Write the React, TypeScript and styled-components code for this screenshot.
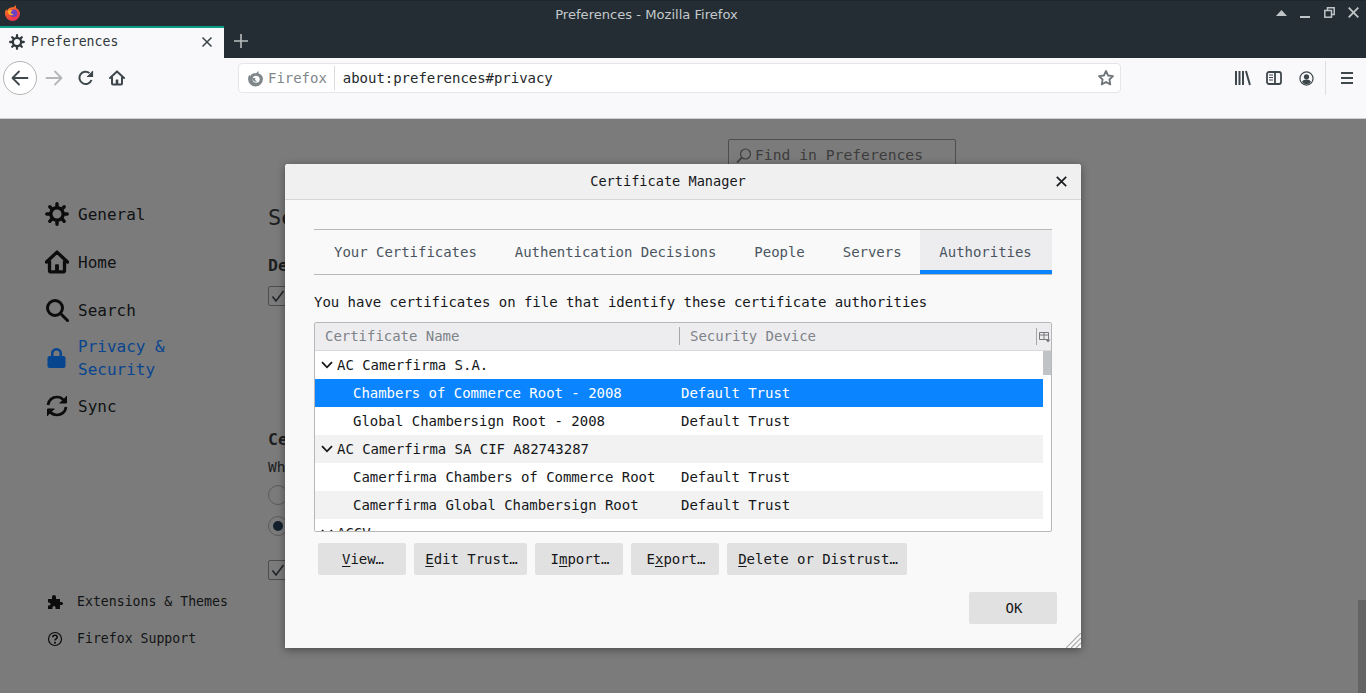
import React from 'react';
import styled, { createGlobalStyle } from 'styled-components';

const Global = createGlobalStyle`
  html, body { margin: 0; padding: 0; height: 100%; overflow: hidden; background: #7b7b7b; }
  * { box-sizing: border-box; }
  #root { height: 100%; }
`;
const mono = `"DejaVu Sans Mono", monospace`;

const Page = styled.div`
  position: relative; width: 1366px; height: 693px; overflow: hidden;
  display: flex; flex-direction: column; font-family: ${mono}; font-size: 14px; letter-spacing: -0.03px;
`;
const Chrome = styled.header`
  height: 58px; background: #232d33; border-top: 1px solid #1d262b; position: relative;
  display: flex; flex-direction: column; flex: none;
`;
const TitleBar = styled.div`
  height: 24px; flex: none; display: flex; align-items: center; padding: 0 7px 3px 4px; position: relative; margin-top: 1px;
`;
const WindowTitle = styled.div`
  position: absolute; left: 0; right: 73px; top: 0; text-align: center; line-height: 25px;
  font-family: "DejaVu Sans", sans-serif; font-size: 13.1px; color: #c4c9cb; letter-spacing: 0;
`;
const WinButtons = styled.div`
  margin-left: auto; display: flex; gap: 13px; align-items: center;
`;
const TabStrip = styled.div`
  height: 32px; display: flex; align-items: stretch;
`;
const ActiveTab = styled.div`
  width: 224px; background: #f9f9fb; border-top: 2px solid #0a9d88; display: flex; align-items: center;
  padding: 0 11px 3px 9px; gap: 6px; color: #30383c; font-size: 13.2px; letter-spacing: 0;
`;
const TabLabel = styled.span`flex: 1;`;
const NewTab = styled.div`width: 33px; display: flex; align-items: center; justify-content: center; padding-bottom: 3px;`;
const NavBar = styled.nav`
  height: 61px; flex: none; background: #f9f9fb; border-bottom: 1px solid #cfcfd3; display: flex; align-items: flex-start;
  padding: 3px 0 0 3px;
`;
const BackCircle = styled.div`
  width: 34px; height: 34px; border: 1px solid #b4b4b4; border-radius: 50%; background: #fff;
  display: flex; align-items: center; justify-content: center; flex: none;
`;
const NavIcons = styled.div`
  display: flex; align-items: center; height: 34px; gap: 15px; margin-left: 8px; width: 193px; flex: none;
`;
const UrlBar = styled.div`
  width: 883px; height: 30px; margin-top: 2px; background: #fff; border: 1px solid #e6e6e9; border-radius: 4px; flex: none;
  display: flex; align-items: center; padding: 0 5px 0 8px;
`;
const Identity = styled.span`
  color: #80868a; font-size: 14px; margin-left: 4px; padding-right: 7px; border-right: 1px solid #dcdcdf; line-height: 24px;
`;
const Url = styled.span`margin-left: 8px; color: #24292c; flex: 1; white-space: nowrap;`;
const RightIcons = styled.div`
  display: flex; align-items: center; height: 34px; margin-left: 106px;
`;
const IconSlot = styled.div<{ $w: number }>`
  width: ${p => p.$w}px; display: flex; justify-content: center; align-items: center;
`;
const Divider = styled.div`width: 1px; height: 34px; background: #dedee1; margin-left: 3px;`;
const MenuSlot = styled.div`margin-left: 15px; display: flex;`;

const Content = styled.main`
  flex: 1; background: #7b7b7b; position: relative; display: grid; grid-template-columns: 268px 1fr; color: #111;
`;
const Side = styled.aside`
  padding: 80px 0 0 45px; display: flex; flex-direction: column; position: relative; height: 100%;
`;
const SideItem = styled.div<{ $h: number; $active?: boolean }>`
  display: flex; align-items: center; height: ${p => p.$h}px; gap: 9px; font-size: 16px; line-height: 23px; flex: none;
  color: ${p => (p.$active ? '#08458f' : '#101214')}; letter-spacing: 0;
  & > svg { flex: none; }
`;
const SideFooter = styled.div`
  margin-top: auto; margin-bottom: 46px; padding-left: 1px; display: flex; flex-direction: column; gap: 20px;
`;
const FootItem = styled.div`
  display: flex; align-items: center; gap: 14px; font-size: 13.2px; height: 17px; color: #121416; margin-left: 1px; letter-spacing: 0; white-space: nowrap;
`;
const Main = styled.section`
  position: relative; color: #1c1e20;
`;
const FindBox = styled.div`
  position: absolute; left: 460px; top: 20px; width: 228px; height: 40px; border: 1px solid #4e4e4e; border-radius: 2px;
  display: flex; align-items: flex-start; padding: 6px 0 0 7px; gap: 3px; color: #3d3d3d; font-size: 14.7px; letter-spacing: 0;
`;
const Frag = styled.div<{ $x?: number; $y: number; $size: number; $bold?: boolean }>`
  position: absolute; left: ${p => p.$x ?? 0}px; top: ${p => p.$y}px; font-size: ${p => p.$size}px; font-weight: ${p => (p.$bold ? 700 : 400)};
  white-space: nowrap; line-height: 1;
`;
const Check = styled.div<{ $y: number }>`
  position: absolute; left: 0; top: ${p => p.$y}px; width: 20px; height: 20px; border: 1px solid #4d4d4d; border-radius: 2px;
  display: flex; align-items: center; justify-content: center;
`;
const Radio = styled.div<{ $y: number; $on?: boolean }>`
  position: absolute; left: 0; top: ${p => p.$y}px; width: 20px; height: 20px; border: 1px solid #5a5a5a; border-radius: 50%;
  display: flex; align-items: center; justify-content: center;
  &::after { content: ''; width: 10px; height: 10px; border-radius: 50%; background: ${p => (p.$on ? '#15202e' : 'transparent')}; }
`;
const ScrollThumb = styled.div`
  position: absolute; right: 0; top: 481px; width: 8px; height: 93px; background: #646464;
`;

const Dialog = styled.div`
  position: absolute; left: 285px; top: 164px; width: 796px; height: 484px; background: #f9f9f9; border-radius: 3px 3px 0 0;
  box-shadow: 0 2px 8px rgba(0,0,0,.4); display: flex; flex-direction: column; color: #111;
`;
const DialogHead = styled.div`
  height: 36px; flex: none; background: #f0f0f0; border-bottom: 1px solid #d6d6d6; border-radius: 3px 3px 0 0;
  display: flex; align-items: center; justify-content: center; position: relative; font-size: 13.6px; color: #16181a; padding: 0 30px 1px 0; letter-spacing: 0;
`;
const CloseBtn = styled.div`position: absolute; right: 14px; top: 12px; display: flex;`;
const DialogBody = styled.div`
  flex: 1; padding: 29px 29px 0 29px; display: flex; flex-direction: column; position: relative;
`;
const Tabs = styled.div`
  height: 46px; border-top: 1px solid #b8b8b8; border-bottom: 1px solid #b8b8b8; display: flex; flex: none; padding-left: 1px;
`;
const TabItem = styled.div`
  padding: 0 19px; display: flex; align-items: center; color: #4a5560; font-size: 14px; height: 44px; white-space: nowrap; flex: none;
`;
const ActiveTabItem = styled(TabItem)`
  margin-left: -1px; width: 132px; padding: 4px 0 0; justify-content: center;
  background: #ededf0; border-bottom: 4px solid #0a84ff;
`;
const Caption = styled.div`
  margin-top: 19px; line-height: 17px; font-size: 14px; color: #15171a; flex: none;
`;
const Tree = styled.div`
  margin-top: 11px; height: 210px; border: 1px solid #b8b8b8; border-radius: 2px; background: #fff; flex: none; overflow: hidden; position: relative;
`;
const TreeHead = styled.div`
  height: 28px; background: #ededf0; border-bottom: 1px solid #d9d9dc; display: flex; align-items: center; color: #7e8388; position: relative; font-size: 14px; padding-bottom: 2px;
`;
const HeadCell = styled.div<{ $w: number }>`
  width: ${p => p.$w}px; padding-left: 10px; flex: none;
  &:nth-child(2) { border-left: 1px solid #a6a6a8; line-height: 18px; }
`;
const ColPicker = styled.div`
  position: absolute; right: 0; top: 0; height: 28px; width: 15px; display: flex; align-items: center; justify-content: flex-end;
  &::before { content: ''; position: absolute; left: 0; top: 5px; height: 17px; width: 1px; background: #a6a6a8; }
`;
const Rows = styled.div`width: 728px;`;
const Row = styled.div<{ $alt?: boolean; $sel?: boolean; $child?: boolean }>`
  height: 28px; display: flex; align-items: center; font-size: 14px;
  background: ${p => (p.$sel ? '#0a84ff' : p.$alt ? '#f2f2f2' : '#fff')};
  color: ${p => (p.$sel ? '#fff' : '#15171a')};
  padding-left: ${p => (p.$child ? '38px' : '6px')};
`;
const RowName = styled.span<{ $child?: boolean }>`
  width: ${p => (p.$child ? '328px' : 'auto')}; white-space: nowrap; margin-left: ${p => (p.$child ? '0' : '4px')};
`;
const Thumb = styled.div`
  position: absolute; right: 0; top: 28px; width: 8px; height: 24px; background: #bfc3c5;
`;
const BtnRow = styled.div`
  margin-top: 11px; padding-left: 4px; display: flex; gap: 8px; flex: none;
`;
const Btn = styled.div<{ $w: number }>`
  width: ${p => p.$w}px; height: 32px; background: #e1e1e1; border-radius: 2px; display: flex; align-items: center; justify-content: center;
  font-size: 14px; color: #15171a; padding: 0 0 1px 2px;
  u { text-underline-offset: 2px; }
`;
const OkRow = styled.div`
  margin-top: 17px; display: flex; justify-content: flex-end; margin-right: -5px; flex: none;
`;
const Grip = styled.svg`position: absolute; right: 0; bottom: 0;`;

const Gear = ({ s = 16, c = '#30383c' }: { s?: number; c?: string }) => (
  <svg width={s} height={s} viewBox="0 0 24 24" fill="none">
    <circle cx="12" cy="12" r="6.2" stroke={c} strokeWidth="3.4" />
    <g stroke={c} strokeWidth="3.4" strokeLinecap="round">
      <path d="M12 1.8v2.6M12 19.6v2.6M1.8 12h2.6M19.6 12h2.6M4.8 4.8l1.9 1.9M17.3 17.3l1.9 1.9M4.8 19.2l1.9-1.9M17.3 6.7l1.9-1.9" />
    </g>
  </svg>
);
const Home = ({ s = 16, c = '#3e474c', w = 2 }: { s?: number; c?: string; w?: number }) => (
  <svg width={s} height={s} viewBox="0 0 16 16" fill="none">
    <path d="M1 8 8 1.4 15 8" stroke={c} strokeWidth={w} strokeLinecap="round" strokeLinejoin="round" />
    <path d="M3 7v6.6c0 .6.4 1 1 1h8c.6 0 1-.4 1-1V7" stroke={c} strokeWidth={w} />
    <rect x="6.7" y="9.5" width="2.6" height="5" rx=".6" fill={c} />
  </svg>
);
const Firefox = () => (
  <svg width="17" height="17" viewBox="0 0 18 18">
    <defs>
      <linearGradient id="ff" x1="0" y1="0" x2="0.6" y2="1">
        <stop offset="0" stopColor="#ff9a1f" />
        <stop offset="0.55" stopColor="#f0502e" />
        <stop offset="1" stopColor="#e8305e" />
      </linearGradient>
    </defs>
    <path d="M12 1c1 1.500 1 2.500 .6 3.200C15.500 5.500 17 8 17 10a8 8 0 1 1-16 0c0-2 .7-3.700 1.500-4.800 0 .9.200 1.500.7 1.900C4.500 4.500 7 3.500 9 3.500c1.200 0 2.500-.9 3-2.500z" fill="url(#ff)" />
    <circle cx="10" cy="9.800" r="4" fill="#6d3fc4" />
    <path d="M4.300 6.800c1.500-.8 3.600-.8 5 .2l-2.200 1.400c.2 1.700 1.700 2.700 3.400 2.300-1.200 1.700-4 1.700-5.400 0-.7-.9-1-2.500-.8-3.900z" fill="#ffb02a" />
  </svg>
);
const Chevron = () => (
  <svg width="12" height="8" viewBox="0 0 12 8" fill="none" stroke="#15171a" strokeWidth="1.800"><path d="M1 1.200 6 6.300l5-5.100" /></svg>
);
const Tick = () => (
  <svg width="14" height="14" viewBox="0 0 14 14" fill="none" stroke="#202428" strokeWidth="1.600"><path d="M1.500 7.500 5 12 12.500 2" /></svg>
);

export default function App() {
  return (
    <Page>
      <Global />
      <Chrome>
        <TitleBar>
          <Firefox />
          <WindowTitle>Preferences - Mozilla Firefox</WindowTitle>
          <WinButtons>
            <svg width="11" height="6" viewBox="0 0 11 6"><path d="M5.500 0 11 6H0z" fill="#c0c5c7" /></svg>
            <svg width="11" height="11" viewBox="0 0 11 11"><rect x="0" y="9" width="10" height="2" fill="#c0c5c7" /></svg>
            <svg width="11" height="11" viewBox="0 0 11 11" fill="none" stroke="#c0c5c7" strokeWidth="1.500"><path d="M3.500 3V.8h6.700v6.700H8" /><rect x=".8" y="3.500" width="6.700" height="6.700" /></svg>
            <svg width="11" height="11" viewBox="0 0 11 11" stroke="#c0c5c7" strokeWidth="1.800"><path d="M.7.700l9.600 9.600M10.300.7.700 10.300" /></svg>
          </WinButtons>
        </TitleBar>
        <TabStrip>
          <ActiveTab>
            <Gear s={16} />
            <TabLabel>Preferences</TabLabel>
            <svg width="12" height="12" viewBox="0 0 12 12" stroke="#3a4347" strokeWidth="1.500"><path d="M1.500 1.500l9 9M10.500 1.500l-9 9" /></svg>
          </ActiveTab>
          <NewTab>
            <svg width="14" height="14" viewBox="0 0 14 14" stroke="#b9bec0" strokeWidth="1.600"><path d="M7 0v14M0 7h14" /></svg>
          </NewTab>
        </TabStrip>
      </Chrome>
      <NavBar>
        <BackCircle>
          <svg width="18" height="16" viewBox="0 0 18 16" fill="none" stroke="#3e474c" strokeWidth="1.800" strokeLinecap="round" strokeLinejoin="round"><path d="M1.500 8h15M8 1.500 1.500 8 8 14.500" /></svg>
        </BackCircle>
        <NavIcons>
          <svg width="18" height="16" viewBox="0 0 18 16" fill="none" stroke="#b4b6b8" strokeWidth="1.800" strokeLinecap="round" strokeLinejoin="round"><path d="M1.500 8h15M10 1.500 16.500 8 10 14.500" /></svg>
          <svg width="16" height="16" viewBox="0 0 16 16" fill="none" stroke="#3e474c" strokeWidth="2"><path d="M13.500 10A6.200 6.200 0 1 1 11.500 3" /><path d="M14.500 1v5.500H9" fill="#3e474c" strokeWidth="1.200" /></svg>
          <Home />
        </NavIcons>
        <UrlBar>
          <svg width="17" height="17" viewBox="0 0 16 16"><path d="M10.500 .8c.5 1 .5 1.700.2 2.300C13.400 4 15 6 15 8.500a7 7 0 1 1-14 0c0-1.700.6-3.200 1.300-4.200 0 .8.200 1.300.6 1.600C4 3.500 6 3 8 3c1 0 2-.7 2.500-2.200z" fill="#80878b" /><circle cx="8.600" cy="8.600" r="3.300" fill="#fff" /><path d="M5 7.500h3l-.5 2 2 1c-1.500 1-4 .5-4.500-3z" fill="#80878b" /></svg>
          <Identity>Firefox</Identity>
          <Url>about:preferences#privacy</Url>
          <svg width="18" height="18" viewBox="0 0 18 18" fill="none" stroke="#6e7579" strokeWidth="1.800" strokeLinejoin="round"><path d="M9 2l2.100 4.500 4.900.6-3.600 3.400.9 4.900L9 13l-4.300 2.400.9-4.900L2 7.100l4.900-.6z" /></svg>
        </UrlBar>
        <RightIcons>
          <IconSlot $w={31}>
            <svg width="16" height="16" viewBox="0 0 16 16" fill="#3e474c"><rect x="0" y="1" width="2" height="14" /><rect x="3.500" y="1" width="2" height="14" /><rect x="7" y="1" width="2" height="14" /><path d="M10 1.300l1.900-.5 4 14-1.900.5z" /></svg>
          </IconSlot>
          <IconSlot $w={32}>
            <svg width="16" height="14" viewBox="0 0 16 14" fill="none"><rect x="1" y="1" width="14" height="12" rx="2" stroke="#3e474c" strokeWidth="1.800" /><path d="M9 1v12" stroke="#3e474c" strokeWidth="1.800" /><path d="M3 4h4M3 6.500h4M3 9h4" stroke="#3e474c" strokeWidth="1.200" /></svg>
          </IconSlot>
          <IconSlot $w={32}>
            <svg width="15" height="15" viewBox="0 0 16 16" fill="none"><circle cx="8" cy="8" r="7" stroke="#3e474c" strokeWidth="1.300" /><circle cx="8" cy="6.200" r="2.800" fill="#3e474c" /><path d="M3.200 11.500c1-1.800 2.800-2.500 4.800-2.500s3.800.7 4.800 2.500C11.500 13.500 9.800 14 8 14s-3.500-.5-4.800-2.500z" fill="#3e474c" /></svg>
          </IconSlot>
          <Divider />
          <MenuSlot>
            <svg width="12" height="14" viewBox="0 0 12 14" stroke="#3e474c" strokeWidth="1.800"><path d="M0 2h12M0 7h12M0 12h12" /></svg>
          </MenuSlot>
        </RightIcons>
      </NavBar>
      <Content>
        <Side>
          <SideItem $h={30}><Gear s={24} c="#0c0c0c" /><span>General</span></SideItem>
          <SideItem $h={18} />
          <SideItem $h={30}><Home s={24} c="#0c0c0c" w={2.200} /><span>Home</span></SideItem>
          <SideItem $h={18} />
          <SideItem $h={30}>
            <svg width="24" height="24" viewBox="0 0 24 24" fill="none" stroke="#0c0c0c" strokeWidth="3" strokeLinecap="round"><circle cx="10" cy="10" r="7.500" /><path d="M15.500 15.500 22.500 22.500" /></svg>
            <span>Search</span>
          </SideItem>
          <SideItem $h={10} />
          <SideItem $h={46} $active>
            <svg width="24" height="24" viewBox="0 0 24 24" fill="#08458f"><rect x="2.500" y="10" width="18" height="12" rx="2" /><path d="M6 11V7.500a5.500 5.500 0 0 1 11 0V11h-2.500V7.500a3 3 0 0 0-6 0V11z" /></svg>
            <span>Privacy &amp;<br />Security</span>
          </SideItem>
          <SideItem $h={10} />
          <SideItem $h={30}>
            <svg width="24" height="24" viewBox="0 0 24 24" fill="none" stroke="#0c0c0c" strokeWidth="2.700"><path d="M3 11C3.500 6 7.500 3 12 3c3.500 0 6 1.800 7.500 4.500" /><path d="M21.500 2v7h-7" fill="#0c0c0c" strokeWidth="1" /><path d="M21 13c-.5 5-4.500 8-9 8-3.500 0-6-1.800-7.500-4.500" /><path d="M2.500 22v-7h7" fill="#0c0c0c" strokeWidth="1" /></svg>
            <span>Sync</span>
          </SideItem>
          <SideFooter>
            <FootItem>
              <svg width="16" height="16" viewBox="0 0 16 16" fill="#0c0c0c"><path d="M1 5h4V3a2 2 0 0 1 4 0v2h4v3h1.500a1.500 1.500 0 0 1 0 3H13v4H8.500v-1.500a1.500 1.500 0 0 0-3 0V15H1v-3.500h1a1.500 1.500 0 0 0 0-3H1z" /></svg>
              <span>Extensions &amp; Themes</span>
            </FootItem>
            <FootItem>
              <svg width="16" height="16" viewBox="0 0 16 16" fill="none" stroke="#0c0c0c" strokeWidth="1.200"><circle cx="8" cy="8" r="6.500" /><path d="M5.800 6.200C5.800 5 6.800 4.200 8 4.200s2.200.8 2.200 2c0 1.700-2.200 1.600-2.200 3.400" strokeWidth="1.500" /><circle cx="8" cy="11.700" r="1" fill="#0c0c0c" stroke="none" /></svg>
              <span>Firefox Support</span>
            </FootItem>
          </SideFooter>
        </Side>
        <Main>
          <FindBox>
            <svg width="16" height="16" viewBox="0 0 16 16" fill="none" stroke="#3d3d3d" strokeWidth="1.200" style={{ marginTop: 2 }}><circle cx="9.500" cy="6" r="5" /><path d="M5.800 9.700 1 14.500" strokeWidth="1.700" /></svg>
            <span>Find in Preferences</span>
          </FindBox>
          <Frag $y={88} $size={22}>Se</Frag>
          <Frag $y={139} $size={16.500} $bold>De</Frag>
          <Check $y={167}><Tick /></Check>
          <Frag $y={313} $size={16.500} $bold>Ce</Frag>
          <Frag $y={341} $size={14.500}>Wh</Frag>
          <Radio $y={366} />
          <Radio $y={397} $on />
          <Check $y={441}><Tick /></Check>
        </Main>
        <ScrollThumb />
      </Content>
      <Dialog>
        <DialogHead>
          Certificate Manager
          <CloseBtn>
            <svg width="11" height="11" viewBox="0 0 11 11" stroke="#1a1c1e" strokeWidth="1.700"><path d="M.8.800l9.400 9.400M10.200.8.800 10.200" /></svg>
          </CloseBtn>
        </DialogHead>
        <DialogBody>
          <Tabs>
            <TabItem>Your Certificates</TabItem>
            <TabItem>Authentication Decisions</TabItem>
            <TabItem>People</TabItem>
            <TabItem>Servers</TabItem>
            <ActiveTabItem>Authorities</ActiveTabItem>
          </Tabs>
          <Caption>You have certificates on file that identify these certificate authorities</Caption>
          <Tree>
            <TreeHead>
              <HeadCell $w={364}>Certificate Name</HeadCell>
              <HeadCell $w={300}>Security Device</HeadCell>
              <ColPicker>
                <svg width="12" height="12" viewBox="0 0 12 12" fill="none" stroke="#77797c"><path d="M.5 1.500h9v7h-9zM.5 4h9M5 1.500v7" /><path d="M6.500 8.500h5L9 11.500z" fill="#77797c" stroke="none" /></svg>
              </ColPicker>
            </TreeHead>
            <Rows>
              <Row><Chevron /><RowName>AC Camerfirma S.A.</RowName></Row>
              <Row $sel $child><RowName $child>Chambers of Commerce Root - 2008</RowName><span>Default Trust</span></Row>
              <Row $child><RowName $child>Global Chambersign Root - 2008</RowName><span>Default Trust</span></Row>
              <Row $alt><Chevron /><RowName>AC Camerfirma SA CIF A82743287</RowName></Row>
              <Row $child><RowName $child>Camerfirma Chambers of Commerce Root</RowName><span>Default Trust</span></Row>
              <Row $alt $child><RowName $child>Camerfirma Global Chambersign Root</RowName><span>Default Trust</span></Row>
              <Row><Chevron /><RowName>ACCV</RowName></Row>
            </Rows>
            <Thumb />
          </Tree>
          <BtnRow>
            <Btn $w={88}><span><u>V</u>iew…</span></Btn>
            <Btn $w={113}><span><u>E</u>dit Trust…</span></Btn>
            <Btn $w={88}><span>I<u>m</u>port…</span></Btn>
            <Btn $w={88}><span>E<u>x</u>port…</span></Btn>
            <Btn $w={180}><span><u>D</u>elete or Distrust…</span></Btn>
          </BtnRow>
          <OkRow><Btn $w={88}>OK</Btn></OkRow>
          <Grip width="15" height="15" viewBox="0 0 15 15" stroke="#aaa" strokeWidth="1.200"><path d="M0 15 15 0M5 15 15 5M10 15 15 10" /></Grip>
        </DialogBody>
      </Dialog>
    </Page>
  );
}
